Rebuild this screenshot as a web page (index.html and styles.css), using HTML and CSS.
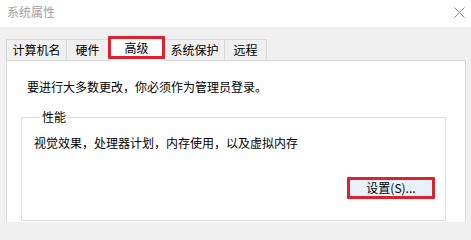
FILE: index.html
```html
<!DOCTYPE html>
<html lang="zh-CN">
<head>
<meta charset="utf-8">
<title>系统属性</title>
<link rel="stylesheet" href="styles.css">
</head>
<body>
<div class="window">
  <div class="titlebar">
    <span class="title">系统属性</span>
    <span class="close" aria-label="关闭">
      <svg width="11" height="11" viewBox="0 0 11 11"><path d="M0.5 0.5 L10.5 10.5 M10.5 0.5 L0.5 10.5" stroke="#8a8a8a" stroke-width="1" fill="none"/></svg>
    </span>
  </div>
  <div class="tabs">
    <div class="tab">计算机名</div>
    <div class="tab">硬件</div>
    <div class="tab tab-active">高级</div>
    <div class="tab">系统保护</div>
    <div class="tab">远程</div>
  </div>
  <div class="panel">
    <p class="intro">要进行大多数更改，你必须作为管理员登录。</p>
    <fieldset class="group">
      <legend class="group-title">性能</legend>
      <p class="group-desc">视觉效果，处理器计划，内存使用，以及虚拟内存</p>
      <div class="group-actions">
        <button class="btn btn-marked" type="button">设置(S)...</button>
      </div>
    </fieldset>
  </div>
</div>
</body>
</html>
```

FILE: styles.css
```css
html, body {
  margin: 0;
  padding: 0;
  width: 471px;
  height: 222px;
  overflow: hidden;
  background: #f0f0f0;
  font-family: "Noto Sans CJK SC", "Microsoft YaHei", sans-serif;
  font-size: 12px;
  color: #000;
}

.window {
  display: flex;
  flex-direction: column;
  height: 222px;
}

.titlebar {
  height: 27px;
  flex: none;
  background: #fff;
  display: flex;
  align-items: center;
  justify-content: space-between;
  padding: 0 6px 3px 7px;
  box-sizing: border-box;
}

.title {
  color: #a0a0a0;
  font-size: 12px;
  line-height: 16px;
}

.close {
  display: flex;
  width: 11px;
  height: 11px;
}

.tabs {
  display: flex;
  flex: none;
  align-items: flex-end;
  margin: 9px 0 0 6px;
  height: 24px;
  position: relative;
  z-index: 1;
}

.tab {
  box-sizing: border-box;
  height: 21px;
  min-width: 43px;
  padding: 0 5.5px;
  border: 1px solid #d9d9d9;
  border-bottom: none;
  background: #f0f0f0;
  text-align: center;
  line-height: 19px;
  margin-right: -1px;
  white-space: nowrap;
}

.tab-active {
  position: relative;
  height: 25px;
  min-width: 57px;
  margin-bottom: -1px;
  background: #fff;
  line-height: 22px;
}

.tab-active::after {
  content: "";
  position: absolute;
  left: -1px;
  right: -1px;
  top: -1px;
  bottom: 2px;
  border: 3px solid #e0212d;
  border-radius: 1px;
}

.panel {
  flex: 1;
  min-height: 0;
  margin: 0 5px 0 6px;
  background: #fff;
  border: 1px solid #d9d9d9;
  border-bottom: none;
  padding: 18px 19px 0 14px;
}

.intro {
  margin: 0 0 14px 6px;
  line-height: 16px;
}

.group {
  margin: 0;
  border: 1px solid #dcdcdc;
  padding: 10px 10px 21px 12px;
}

.group-title {
  padding: 0 2px;
  margin-left: 6px;
  line-height: 16px;
}

.group-desc {
  margin: 0;
  line-height: 16px;
}

.group-actions {
  display: flex;
  justify-content: flex-end;
  margin-top: 26px;
}

.btn {
  box-sizing: border-box;
  width: 88px;
  height: 22px;
  background: #e5f1fb;
  border: 1px solid #0078d7;
  font-family: inherit;
  font-size: 12px;
  color: #000;
  padding: 0;
  line-height: 16px;
}

.btn-marked {
  border: 3px solid #e0212d;
  border-radius: 1px;
}
```
